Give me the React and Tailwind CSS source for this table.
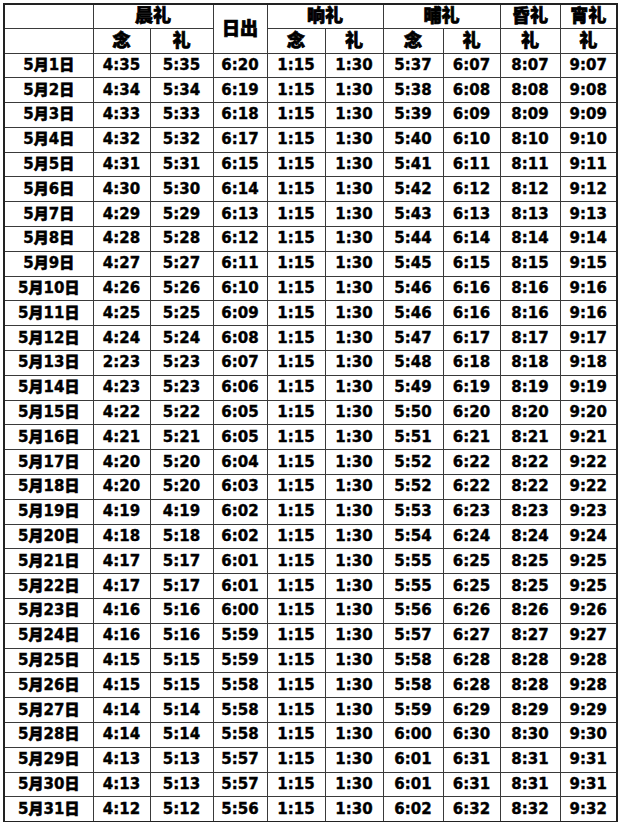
const rows = [
  [1, "4:35", "5:35", "6:20", "5:37", "6:07", "8:07", "9:07"],
  [2, "4:34", "5:34", "6:19", "5:38", "6:08", "8:08", "9:08"],
  [3, "4:33", "5:33", "6:18", "5:39", "6:09", "8:09", "9:09"],
  [4, "4:32", "5:32", "6:17", "5:40", "6:10", "8:10", "9:10"],
  [5, "4:31", "5:31", "6:15", "5:41", "6:11", "8:11", "9:11"],
  [6, "4:30", "5:30", "6:14", "5:42", "6:12", "8:12", "9:12"],
  [7, "4:29", "5:29", "6:13", "5:43", "6:13", "8:13", "9:13"],
  [8, "4:28", "5:28", "6:12", "5:44", "6:14", "8:14", "9:14"],
  [9, "4:27", "5:27", "6:11", "5:45", "6:15", "8:15", "9:15"],
  [10, "4:26", "5:26", "6:10", "5:46", "6:16", "8:16", "9:16"],
  [11, "4:25", "5:25", "6:09", "5:46", "6:16", "8:16", "9:16"],
  [12, "4:24", "5:24", "6:08", "5:47", "6:17", "8:17", "9:17"],
  [13, "2:23", "5:23", "6:07", "5:48", "6:18", "8:18", "9:18"],
  [14, "4:23", "5:23", "6:06", "5:49", "6:19", "8:19", "9:19"],
  [15, "4:22", "5:22", "6:05", "5:50", "6:20", "8:20", "9:20"],
  [16, "4:21", "5:21", "6:05", "5:51", "6:21", "8:21", "9:21"],
  [17, "4:20", "5:20", "6:04", "5:52", "6:22", "8:22", "9:22"],
  [18, "4:20", "5:20", "6:03", "5:52", "6:22", "8:22", "9:22"],
  [19, "4:19", "4:19", "6:02", "5:53", "6:23", "8:23", "9:23"],
  [20, "4:18", "5:18", "6:02", "5:54", "6:24", "8:24", "9:24"],
  [21, "4:17", "5:17", "6:01", "5:55", "6:25", "8:25", "9:25"],
  [22, "4:17", "5:17", "6:01", "5:55", "6:25", "8:25", "9:25"],
  [23, "4:16", "5:16", "6:00", "5:56", "6:26", "8:26", "9:26"],
  [24, "4:16", "5:16", "5:59", "5:57", "6:27", "8:27", "9:27"],
  [25, "4:15", "5:15", "5:59", "5:58", "6:28", "8:28", "9:28"],
  [26, "4:15", "5:15", "5:58", "5:58", "6:28", "8:28", "9:28"],
  [27, "4:14", "5:14", "5:58", "5:59", "6:29", "8:29", "9:29"],
  [28, "4:14", "5:14", "5:58", "6:00", "6:30", "8:30", "9:30"],
  [29, "4:13", "5:13", "5:57", "6:01", "6:31", "8:31", "9:31"],
  [30, "4:13", "5:13", "5:57", "6:01", "6:31", "8:31", "9:31"],
  [31, "4:12", "5:12", "5:56", "6:02", "6:32", "8:32", "9:32"],
];

// column widths measured off the screenshot
const widths = [89, 57, 63, 54, 58, 58, 60, 57, 60, 57];

const cell = "border border-[#3a3a3a] p-0 text-center align-middle leading-none";
const head = cell + " text-[18px] font-black [-webkit-text-stroke:0.7px_black]";
const cjk = "font-black [-webkit-text-stroke:0.6px_black]";

export default function App() {
  return (
    <div className="w-[618px] h-[822px] bg-white pl-[3px] pt-[3px] overflow-hidden">
      <table
        className="table-fixed border-collapse border-2 border-[#222] text-black font-bold text-[15px] [-webkit-text-stroke:0.4px_black]"
        style={{ fontFamily: '"DejaVu Sans", "Noto Sans CJK SC", sans-serif', width: 613 }}
      >
        <colgroup>
          {widths.map((w, i) => (
            <col key={i} style={{ width: w }} />
          ))}
        </colgroup>
        <thead>
          <tr className="h-[24px]">
            <th className={head}></th>
            <th className={head} colSpan={2}>晨礼</th>
            <th className={head} rowSpan={2}>日出</th>
            <th className={head} colSpan={2}>晌礼</th>
            <th className={head} colSpan={2}>晡礼</th>
            <th className={head}>昏礼</th>
            <th className={head}>宵礼</th>
          </tr>
          <tr className="h-[25px]">
            <th className={head}></th>
            <th className={head}>念</th>
            <th className={head}>礼</th>
            <th className={head}>念</th>
            <th className={head}>礼</th>
            <th className={head}>念</th>
            <th className={head}>礼</th>
            <th className={head}>礼</th>
            <th className={head}>礼</th>
          </tr>
        </thead>
        <tbody>
          {rows.map((r) => (
            <tr key={r[0]} className="h-[24.8px]">
              <td className={cell}>
                5<span className={cjk}>月</span>{r[0]}<span className={cjk}>日</span>
              </td>
              <td className={cell}>{r[1]}</td>
              <td className={cell}>{r[2]}</td>
              <td className={cell}>{r[3]}</td>
              <td className={cell}>1:15</td>
              <td className={cell}>1:30</td>
              <td className={cell}>{r[4]}</td>
              <td className={cell}>{r[5]}</td>
              <td className={cell}>{r[6]}</td>
              <td className={cell}>{r[7]}</td>
            </tr>
          ))}
        </tbody>
      </table>
    </div>
  );
}
